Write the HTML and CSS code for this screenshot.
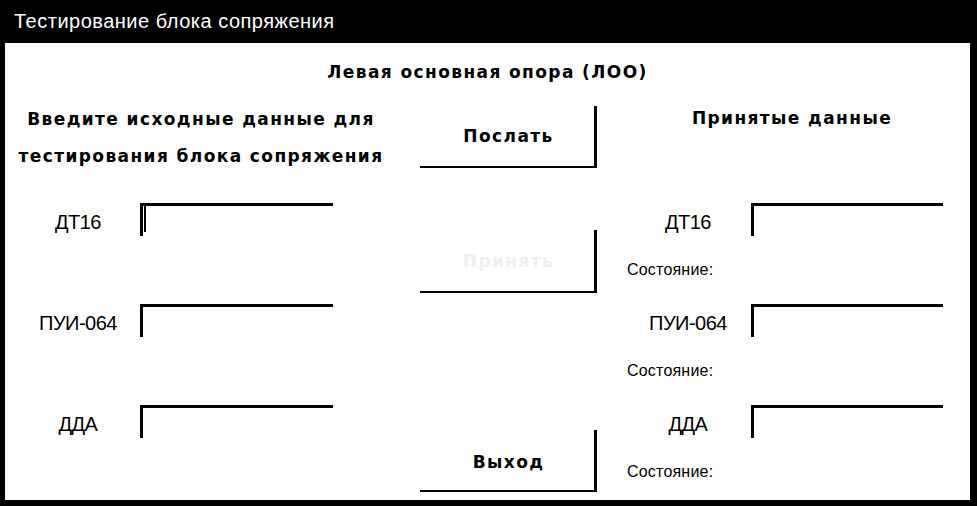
FILE: index.html
```html
<!DOCTYPE html>
<html lang="ru">
<head>
<meta charset="utf-8">
<title>Тестирование блока сопряжения</title>
<link rel="stylesheet" href="styles.css">
</head>
<body>
<div class="window">
  <div class="titlebar">Тестирование блока сопряжения</div>
  <div class="content">
    <div class="heading">Левая основная опора (ЛОО)</div>
    <div class="columns">
      <div class="col-left">
        <div class="intro">Введите исходные данные для<br>тестирования блока сопряжения</div>
        <div class="fields">
          <div class="field"><span class="label">ДТ16</span><span class="input"><span class="caret"></span></span></div>
          <div class="field"><span class="label">ПУИ-064</span><span class="input"></span></div>
          <div class="field"><span class="label">ДДА</span><span class="input"></span></div>
        </div>
      </div>
      <div class="col-mid">
        <div class="btn btn-send">Послать</div>
        <div class="btn btn-disabled">Принять</div>
        <div class="btn btn-exit">Выход</div>
      </div>
      <div class="col-right">
        <div class="rhead">Принятые данные</div>
        <div class="rfields">
          <div class="rblock">
            <div class="rfield"><span class="label">ДТ16</span><span class="input"></span></div>
            <div class="status">Состояние:</div>
          </div>
          <div class="rblock">
            <div class="rfield"><span class="label">ПУИ-064</span><span class="input"></span></div>
            <div class="status">Состояние:</div>
          </div>
          <div class="rblock">
            <div class="rfield"><span class="label">ДДА</span><span class="input"></span></div>
            <div class="status">Состояние:</div>
          </div>
        </div>
      </div>
    </div>
  </div>
</div>
</body>
</html>
```
FILE: styles.css
```css
html, body {
  margin: 0;
  padding: 0;
  background: #fff;
}
.window {
  width: 977px;
  height: 506px;
  box-sizing: border-box;
  background: #000;
  display: flex;
  flex-direction: column;
}
.titlebar {
  height: 43px;
  line-height: 43px;
  padding-left: 14px;
  color: #fff;
  font-family: "Liberation Sans", Arial, sans-serif;
  font-size: 20px;
  letter-spacing: 0.5px;
  white-space: nowrap;
}
.content {
  flex: 1;
  background: #fff;
  margin: 0 7px 6px 5px;
  color: #000;
}
.heading, .intro, .btn, .rhead {
  font-family: "DejaVu Sans", sans-serif;
  font-weight: bold;
  font-size: 17px;
  letter-spacing: 1.4px;
  white-space: nowrap;
}
.heading {
  text-align: center;
  padding-top: 19px;
  line-height: 20px;
}
.columns {
  display: grid;
  grid-template-columns: 392px 223px 1fr;
}
.intro {
  margin-top: 19px;
  line-height: 37px;
  text-align: center;
}
.fields {
  margin-top: 28px;
  display: flex;
  flex-direction: column;
  gap: 68px;
}
.field {
  display: grid;
  grid-template-columns: 135px 193px;
  grid-template-rows: 33px;
}
.label {
  font-family: "Liberation Sans", Arial, sans-serif;
  font-size: 20px;
  letter-spacing: -0.5px;
  line-height: 38px;
  text-align: center;
  white-space: nowrap;
}
.field .label {
  padding-left: 11px;
}
.input {
  display: block;
  height: 33px;
  box-sizing: border-box;
  border-top: 3px solid #000;
  border-left: 3px solid #000;
}
.caret {
  display: block;
  width: 2px;
  height: 26px;
  margin-left: 1px;
  background: #000;
}
.col-mid {
  display: flex;
  flex-direction: column;
  align-items: flex-start;
  padding-left: 23px;
}
.btn {
  width: 177px;
  height: 62px;
  box-sizing: border-box;
  border-right: 3px solid #000;
  border-bottom: 2px solid #000;
  display: flex;
  align-items: center;
  justify-content: center;
  padding-left: 3px;
}
.btn-send { margin-top: 24px; }
.btn-disabled { margin-top: 62px; height: 63px; color: #eeeeee; }
.btn-exit { margin-top: 137px; padding-top: 4px; }
.rhead {
  margin-top: 26px;
  line-height: 20px;
  text-align: center;
  padding-right: 6px;
}
.rfields {
  margin-top: 75px;
  display: flex;
  flex-direction: column;
  gap: 24px;
}
.rfield {
  display: grid;
  grid-template-columns: 131px 192px;
  grid-template-rows: 33px;
}
.rfield .label {
  padding-left: 5px;
}
.status {
  margin-top: 24px;
  padding-left: 7px;
  line-height: 20px;
  font-family: "Liberation Sans", Arial, sans-serif;
  font-size: 16px;
  letter-spacing: 0.2px;
}
```
